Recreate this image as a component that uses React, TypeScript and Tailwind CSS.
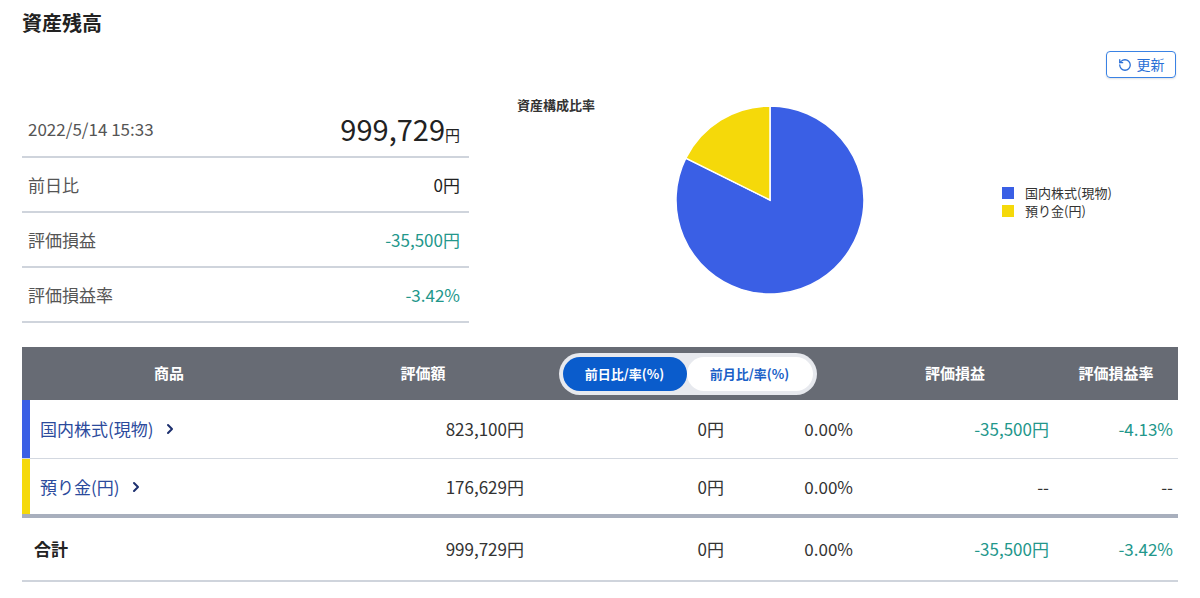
import { RotateCw } from 'lucide-react';

const font = { fontFamily: '"Noto Sans CJK JP", "Noto Sans", sans-serif' };

const summaryRows = [
    { label: '前日比', value: '0円', teal: false },
    { label: '評価損益', value: '-35,500円', teal: true },
    { label: '評価損益率', value: '-3.42%', teal: true },
];

const holdings = [
    { name: '国内株式(現物)', bar: 'bg-[#3a5fe5]', amount: '823,100円', day: '0円', rate: '0.00%', pl: '-35,500円', plRate: '-4.13%', border: 'border-b-[1.5px] border-[#d3d8e0]' },
    { name: '預り金(円)', bar: 'bg-[#f5d90a]', amount: '176,629円', day: '0円', rate: '0.00%', pl: '--', plRate: '--', border: 'border-b-4 border-[#a8afbd]' },
];

function Chevron() {
    return (
        <svg width="8" height="12" viewBox="0 0 8 12" className="ml-[12px]">
            <path d="M2 2l4 4-4 4" fill="none" stroke="#1c2f6e" strokeWidth="2" strokeLinecap="round" strokeLinejoin="round" />
        </svg>
    );
}

function Pie() {
    return (
        <svg width="188" height="188" viewBox="0 0 188 188">
            <path d="M94 94 L9.8 52.2 A94 94 0 1 0 94 0 Z" fill="#3a5fe5" stroke="#fff" strokeWidth="1.5" />
            <path d="M94 94 L94 0 A94 94 0 0 0 9.8 52.2 Z" fill="#f5d90a" stroke="#fff" strokeWidth="1.5" />
        </svg>
    );
}

export default function App() {
    return (
        <div className="w-[1200px] h-[598px] bg-white px-[22px] text-[#333]" style={font}>
            {/* Title */}
            <div className="h-[40px] pt-[10px]">
                <h1 className="text-[20px] leading-[26px] font-bold text-[#222]">資産残高</h1>
            </div>

            {/* Summary + chart */}
            <div className="flex h-[283px]">
                <div className="w-[447px] pt-[61px]">
                    <div className="flex items-center justify-between h-[57px] border-b-2 border-[#cfd4dc] pl-[6px] pr-[9px]">
                        <span className="text-[17px] text-[#555]">2022/5/14 15:33</span>
                        <span className="text-[#222]">
                            <span className="text-[29px]">999,729</span>
                            <span className="text-[15px]">円</span>
                        </span>
                    </div>
                    {summaryRows.map((r) => (
                        <div key={r.label} className="flex items-center justify-between h-[55px] border-b-2 border-[#cfd4dc] pl-[6px] pr-[9px]">
                            <span className="text-[17px] text-[#555]">{r.label}</span>
                            <span className={`text-[17px] ${r.teal ? 'text-[#23978b]' : 'text-[#222]'}`}>{r.value}</span>
                        </div>
                    ))}
                </div>

                <div className="w-[531px] flex items-start pl-[48px]">
                    <div className="w-[159px] mt-[56px] text-[13px] leading-[18px] font-bold text-[#333]">資産構成比率</div>
                    <div className="mt-[66px]">
                        <Pie />
                    </div>
                </div>

                <div className="flex-1 flex flex-col">
                    <button className="self-end mt-[11px] mr-[2px] w-[70px] h-[27px] flex items-center justify-center gap-[5px] rounded-[4px] border-[1.5px] border-[#3a82e4] text-[#2a6fd6] text-[14px] shadow-[0_1px_2px_rgba(0,0,0,0.12)]">
                        <RotateCw className="w-[14px] h-[14px] -scale-x-100 rotate-[0deg]" strokeWidth={2.2} />
                        更新
                    </button>
                    <div className="mt-[106px] pl-[2px] flex flex-col text-[13px] leading-[18px] text-[#333]">
                        <div className="flex items-center gap-[11px]">
                            <span className="w-[12px] h-[12px] bg-[#3a5fe5]" />
                            国内株式(現物)
                        </div>
                        <div className="flex items-center gap-[11px]">
                            <span className="w-[12px] h-[12px] bg-[#f5d90a]" />
                            預り金(円)
                        </div>
                    </div>
                </div>
            </div>

            {/* Table */}
            <div className="mt-[24px]">
                <div className="flex items-center h-[53px] bg-[#676b74] text-white text-[15px] font-bold">
                    <div className="w-[294px] text-center">商品</div>
                    <div className="w-[214px] text-center">評価額</div>
                    <div className="w-[325px] flex justify-center">
                        <div className="flex p-[4px] rounded-full bg-[#e7e9ee] w-[258px] h-[42px] -ml-[10px]">
                            <div className="w-[124px] rounded-full bg-[#0a5ccc] text-white text-[13px] flex items-center justify-center">前日比/率(%)</div>
                            <div className="flex-1 rounded-full bg-white text-[#1a5fc7] text-[13px] flex items-center justify-center">前月比/率(%)</div>
                        </div>
                    </div>
                    <div className="w-[200px] text-center">評価損益</div>
                    <div className="w-[122px] text-center">評価損益率</div>
                </div>

                {holdings.map((h) => (
                    <div key={h.name} className={`flex items-stretch h-[59px] text-[17px] ${h.border}`}>
                        <div className="w-[294px] flex items-center">
                            <span className={`w-[8px] self-stretch ${h.bar}`} />
                            <span className="pl-[10px] text-[#2b4a9c]">{h.name}</span>
                            <Chevron />
                        </div>
                        <div className="w-[214px] flex items-center justify-end pr-[6px]">{h.amount}</div>
                        <div className="w-[200px] flex items-center justify-end pr-[6px]">{h.day}</div>
                        <div className="w-[125px] flex items-center justify-end pr-[2px]">{h.rate}</div>
                        <div className={`w-[200px] flex items-center justify-end pr-[6px] ${h.pl === '--' ? 'text-[#333]' : 'text-[#23978b]'}`}>{h.pl}</div>
                        <div className={`w-[122px] flex items-center justify-end pr-[4px] ${h.plRate === '--' ? 'text-[#333]' : 'text-[#23978b]'}`}>{h.plRate}</div>
                    </div>
                ))}

                <div className="flex items-center h-[64px] text-[17px] border-b-2 border-[#cfd4dc]">
                    <div className="w-[294px] pl-[12px] font-bold text-[#222]">合計</div>
                    <div className="w-[214px] text-right pr-[6px]">999,729円</div>
                    <div className="w-[200px] text-right pr-[6px]">0円</div>
                    <div className="w-[125px] text-right pr-[2px]">0.00%</div>
                    <div className="w-[200px] text-right pr-[6px] text-[#23978b]">-35,500円</div>
                    <div className="w-[122px] text-right pr-[4px] text-[#23978b]">-3.42%</div>
                </div>
            </div>
        </div>
    );
}
